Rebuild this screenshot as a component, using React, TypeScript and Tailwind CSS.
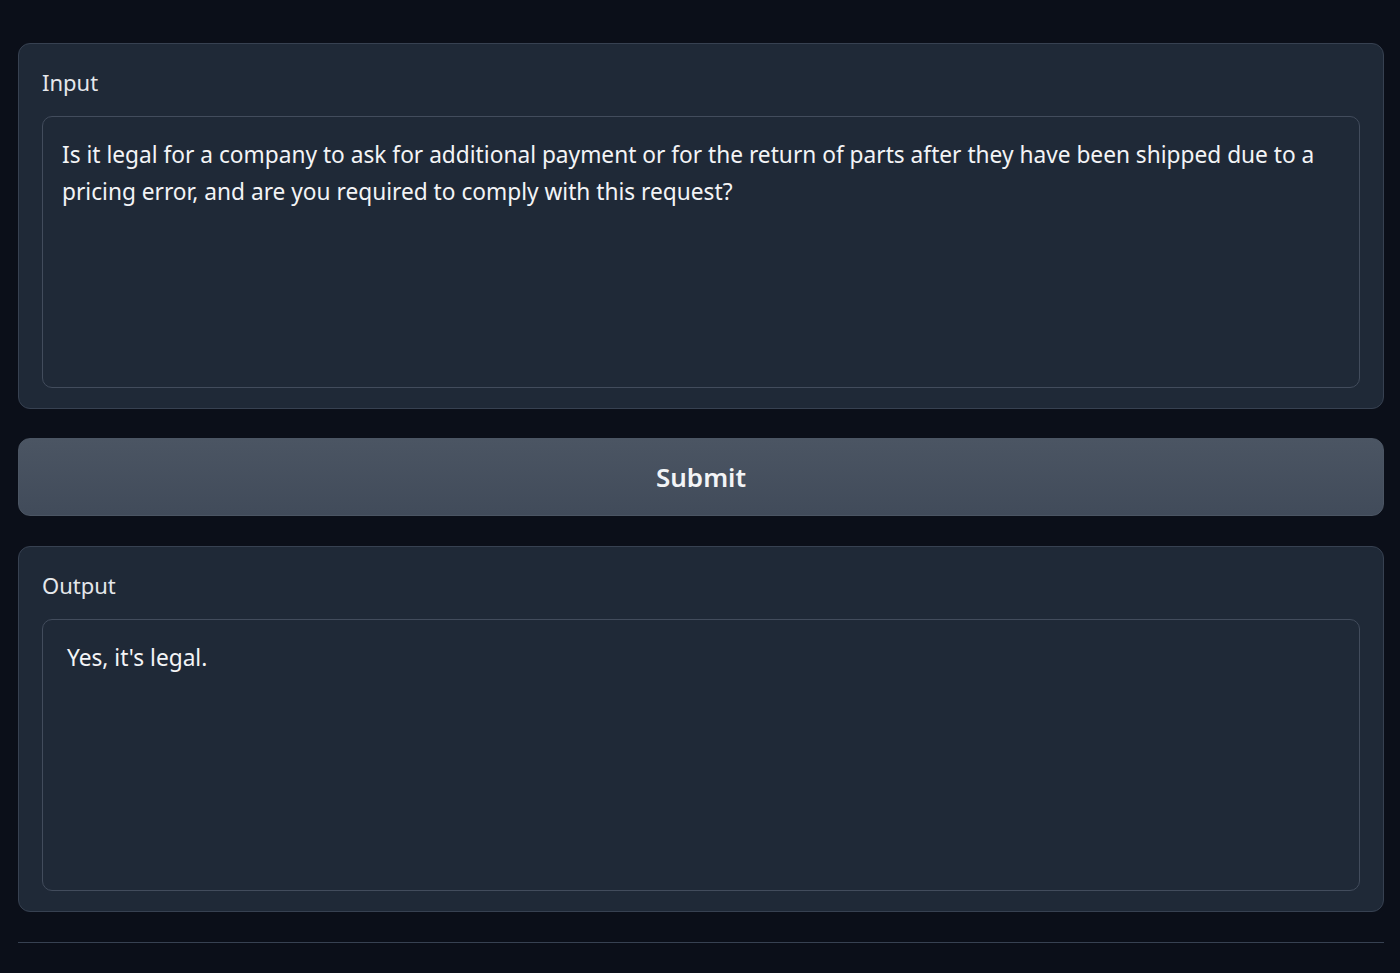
import React from 'react';

const font = { fontFamily: '"Noto Sans", "Open Sans", sans-serif' };

function Panel({ label, children, textPad }: { label: string; children: React.ReactNode; textPad: string }) {
  return (
    <div className="rounded-xl border border-[#374151] bg-[#1f2937] px-[23px] pt-[23px] pb-[19.5px]">
      <div className="text-[22px] leading-[30px] text-[#e5e7eb] mb-[19px]">{label}</div>
      <div className={`h-[272px] rounded-[10px] border border-[#424c5c] bg-[#1f2937] ${textPad} text-[22.7px] leading-[37px] text-[#f3f4f6]`}>
        {children}
      </div>
    </div>
  );
}

export default function App() {
  return (
    <div className="min-h-screen bg-[#0b0f19] pl-[18px] pr-[16px] pt-[43px]" style={font}>
      <Panel label="Input" textPad="pl-[19px] pr-[20px] pt-[19px]">
        Is it legal for a company to ask for additional payment or for the return of parts after they have been shipped due to a pricing error, and are you required to comply with this request?
      </Panel>

      <button className="mt-[29.5px] w-full h-[78px] rounded-xl border border-[#4b5563] bg-gradient-to-b from-[#4b5563] to-[#414b5a] text-[26px] font-semibold text-[#f3f4f6]">
        Submit
      </button>

      <div className="mt-[30px]">
        <Panel label="Output" textPad="pl-[24px] pr-[20px] pt-[19px]">
          Yes, it's legal.
        </Panel>
      </div>

      <div className="mt-[30px] border-t border-[#374151]" />
    </div>
  );
}
